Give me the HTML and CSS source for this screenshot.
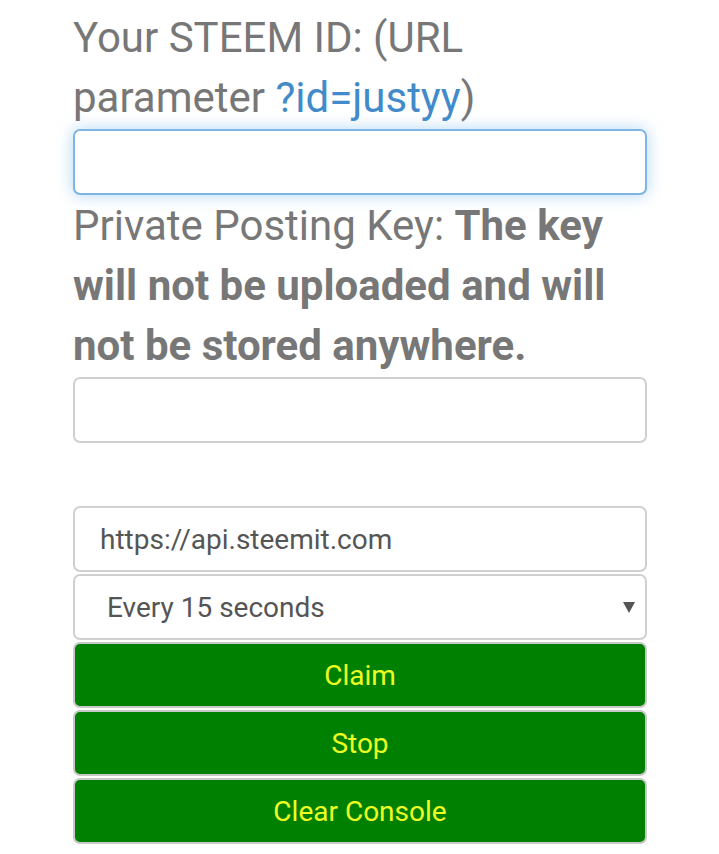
FILE: index.html
```html
<!DOCTYPE html>
<html>
<head>
<meta charset="utf-8">
<link rel="stylesheet" href="styles.css">
</head>
<body>
<div class="page">
  <div class="label">Your STEEM ID: (URL parameter <a class="link" href="#">?id=justyy</a>)</div>
  <div class="field focused"></div>
  <div class="label second">Private Posting Key: <b>The key will not be uploaded and will not be stored anywhere.</b></div>
  <div class="field"></div>
  <div class="spacer"></div>
  <div class="stack">
    <div class="field text">https://api.steemit.com</div>
    <div class="field select"><span>Every 15 seconds</span><span class="arrow"></span></div>
    <div class="btn">Claim</div>
    <div class="btn">Stop</div>
    <div class="btn">Clear Console</div>
  </div>
</div>
</body>
</html>
```
FILE: styles.css
```css
html, body {
  margin: 0;
  padding: 0;
  background: #fff;
}
.page {
  font-family: Roboto, "Noto Sans", sans-serif;
  padding: 8px 72px 0 73px;
  display: flex;
  flex-direction: column;
}
.label {
  font-size: 42px;
  line-height: 60px;
  color: #777;
}
.label b {
  font-weight: 700;
}
.label.second {
  margin-top: 1px;
}
.link {
  color: #428bca;
  text-decoration: none;
}
.field {
  box-sizing: border-box;
  height: 66px;
  border: 2px solid #d0d0d0;
  border-radius: 7px;
  background: #fff;
  margin-top: 1px;
}
.field.focused {
  border-color: #7fb5e2;
  box-shadow: 0 0 16px rgba(102, 175, 233, 0.5);
}
.spacer {
  height: 63px;
}
.stack {
  display: flex;
  flex-direction: column;
  gap: 2px;
}
.stack .field {
  margin-top: 0;
}
.text {
  display: flex;
  align-items: center;
  padding-left: 25px;
  font-size: 28px;
  color: #555;
}
.select {
  display: flex;
  align-items: center;
  justify-content: space-between;
  padding: 0 10px 0 32px;
  font-size: 28px;
  color: #555;
}
.arrow {
  width: 0;
  height: 0;
  border-left: 6px solid transparent;
  border-right: 6px solid transparent;
  border-top: 11px solid #555;
}
.btn {
  box-sizing: border-box;
  height: 66px;
  border: 2px solid #c8c8c8;
  border-radius: 7px;
  background: #008000;
  color: #eeff22;
  font-size: 28px;
  display: flex;
  align-items: center;
  justify-content: center;
}
```
